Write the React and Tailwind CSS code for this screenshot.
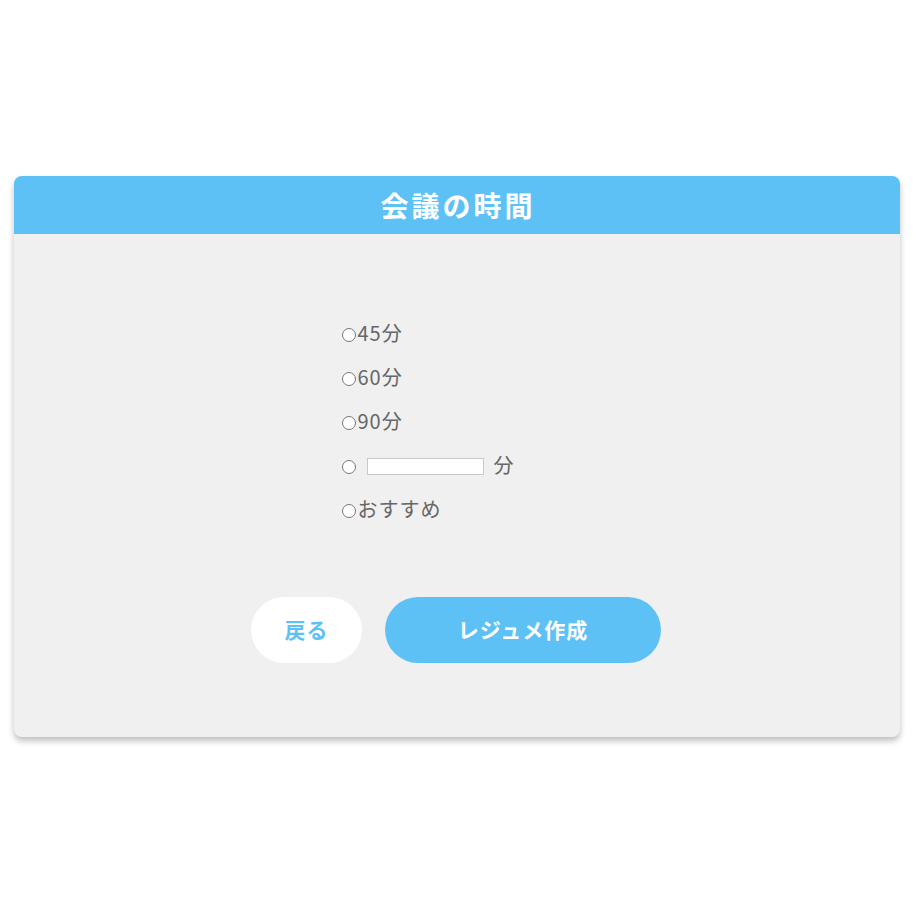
import React from "react";

const font = { fontFamily: '"Noto Sans CJK JP", "Noto Sans", sans-serif' };

function Radio() {
  return (
    <span className="inline-block w-[14px] h-[14px] rounded-full border border-[#777] bg-white shrink-0 mt-[4px]" />
  );
}

export default function App() {
  const options = ["45分", "60分", "90分"];
  return (
    <div className="w-[920px] h-[920px] bg-white pt-[176px] px-[14px]" style={font}>
      <div className="w-[886px] rounded-[8px] overflow-hidden bg-[#f0f0f0] shadow-[0_4px_6px_rgba(0,0,0,0.25)]">
        <div className="h-[58px] bg-[#5dc1f5] flex items-center justify-center">
          <span className="text-white font-bold text-[28px] leading-none tracking-[3px] ml-[2px]">会議の時間</span>
        </div>
        <div className="pt-[77px] pb-[74px]">
          <div className="w-[231px] mx-auto flex flex-col text-[#666] text-[20px] tracking-[1px]">
            {options.map((o) => (
              <div key={o} className="h-[44px] flex items-center">
                <Radio />
                <span className="ml-[2px] leading-none">{o}</span>
              </div>
            ))}
            <div className="h-[44px] flex items-center">
              <Radio />
              <span className="ml-[11px] w-[117px] h-[17px] bg-white border border-[#c8c8c8] mt-[2px]" />
              <span className="ml-[10px] leading-none">分</span>
            </div>
            <div className="h-[44px] flex items-center">
              <Radio />
              <span className="ml-[2px] leading-none">おすすめ</span>
            </div>
          </div>
          <div className="mt-[66px] flex justify-center gap-[23px] pr-[2px]">
            <button className="w-[111px] h-[66px] rounded-full bg-white text-[#5dc1f5] font-bold text-[21px] tracking-[1px]">
              戻る
            </button>
            <button className="w-[276px] h-[66px] rounded-full bg-[#5dc1f5] text-white font-bold text-[21px] tracking-[1px]">
              レジュメ作成
            </button>
          </div>
        </div>
      </div>
    </div>
  );
}
